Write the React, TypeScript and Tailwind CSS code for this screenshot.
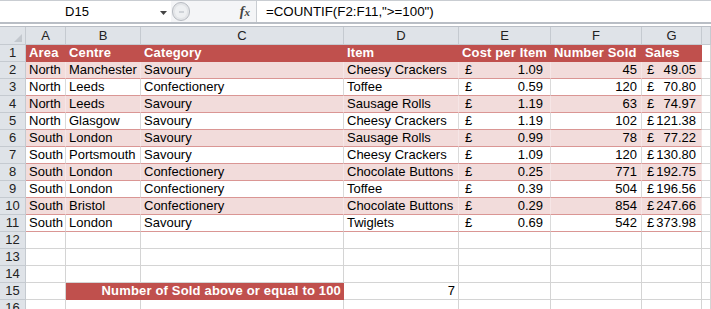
import clsx from 'clsx'

const cn = clsx

type Sale = {
  area: string
  centre: string
  category: string
  item: string
  cost: string
  sold: number
  sales: string
}

const rows: Sale[] = [
  { area: 'North', centre: 'Manchester', category: 'Savoury', item: 'Cheesy Crackers', cost: '1.09', sold: 45, sales: '49.05' },
  { area: 'North', centre: 'Leeds', category: 'Confectionery', item: 'Toffee', cost: '0.59', sold: 120, sales: '70.80' },
  { area: 'North', centre: 'Leeds', category: 'Savoury', item: 'Sausage Rolls', cost: '1.19', sold: 63, sales: '74.97' },
  { area: 'North', centre: 'Glasgow', category: 'Savoury', item: 'Cheesy Crackers', cost: '1.19', sold: 102, sales: '121.38' },
  { area: 'South', centre: 'London', category: 'Savoury', item: 'Sausage Rolls', cost: '0.99', sold: 78, sales: '77.22' },
  { area: 'South', centre: 'Portsmouth', category: 'Savoury', item: 'Cheesy Crackers', cost: '1.09', sold: 120, sales: '130.80' },
  { area: 'South', centre: 'London', category: 'Confectionery', item: 'Chocolate Buttons', cost: '0.25', sold: 771, sales: '192.75' },
  { area: 'South', centre: 'London', category: 'Confectionery', item: 'Toffee', cost: '0.39', sold: 504, sales: '196.56' },
  { area: 'South', centre: 'Bristol', category: 'Confectionery', item: 'Chocolate Buttons', cost: '0.29', sold: 854, sales: '247.66' },
  { area: 'South', centre: 'London', category: 'Savoury', item: 'Twiglets', cost: '0.69', sold: 542, sales: '373.98' },
]

const gridCols = 'grid grid-cols-[26px_40px_75px_203px_115px_92px_91px_60px_1fr]'
const cell = 'h-[17px] border-b border-r px-[3px] flex items-center leading-[16px] whitespace-nowrap overflow-hidden'

function RowNum({ n }: { n: number }) {
  return (
    <div className="flex h-[17px] items-center justify-center border-b border-r border-[#c5cad0] bg-[#dfe3e8] text-[#222]">
      {n}
    </div>
  )
}

function Blank({ className }: { className?: string }) {
  return <div className={cn(cell, 'border-[#d4d4d4]', className)} />
}

export default function App() {
  return (
    <div className="h-[309px] w-[711px] overflow-hidden bg-white text-[13px] text-black [font-family:'Liberation_Sans',Arial,sans-serif]">
      {/* formula bar */}
      <div className="flex h-[24px] border-b-2 border-t border-b-[#b9bec5] border-t-[#c9cdd2]">
        <div className="relative flex w-[171px] items-center">
          <span className="w-[154px] text-center text-[13px]">D15</span>
          <svg className="absolute left-[160px] top-[10px]" width="7" height="4" viewBox="0 0 7 4">
            <path d="M0 0h7L3.5 4z" fill="#444" />
          </svg>
        </div>
        <div className="flex w-[85px] items-center bg-[#f4f5f7]">
          <div className="ml-[1px] flex h-[19px] w-[18px] items-center justify-center rounded-full border border-[#b8bcc2] bg-[#e3e5e8]">
            <div className="flex h-[13px] w-[12px] items-center justify-center rounded-full bg-[#eef0f2]">
              <div className="h-[2px] w-[5px] bg-[#cfd3d8]" />
            </div>
          </div>
          <span className="ml-auto mr-[6px] text-[14px] font-bold italic text-[#444] [font-family:'Liberation_Serif',serif]">
            f<span className="text-[11px]">x</span>
          </span>
        </div>
        <div className="flex flex-1 items-center border-l border-[#c9cdd2] pl-[9px] text-[13.3px]">
          =COUNTIF(F2:F11,"&gt;=100")
        </div>
      </div>
      <div className="h-[3px] border-b border-[#b9bec5] bg-white" />

      {/* column headers */}
      <div className={gridCols}>
        <div className="relative h-[18px] border-b border-r border-[#c5cad0] bg-[#dfe3e8]">
          <svg className="absolute bottom-[2px] right-[3px]" width="8" height="8" viewBox="0 0 8 8">
            <path d="M8 0V8H0z" fill="#c3c8ce" />
          </svg>
        </div>
        {['A', 'B', 'C', 'D', 'E', 'F', 'G', ''].map((c, i) => (
          <div
            key={i}
            className="flex h-[18px] items-center justify-center border-b border-r border-[#c5cad0] bg-[#dfe3e8] text-[#222]"
          >
            {c}
          </div>
        ))}
      </div>

      {/* table header row */}
      <div className={gridCols}>
        <RowNum n={1} />
        {['Area', 'Centre', 'Category', 'Item', 'Cost per Item', 'Number Sold', 'Sales'].map((h) => (
          <div key={h} className={cn(cell, 'border-[#c0504d] bg-[#c0504d] font-bold tracking-[0.15px] text-white')}>
            {h}
          </div>
        ))}
        <Blank />
      </div>

      {rows.map((r, i) => {
        const pink = i % 2 === 0
        const c = cn(cell, 'border-b-[#da9694]', pink ? 'bg-[#f2dcdb] border-r-[#f6e6e6]' : 'bg-white border-r-[#dadada]')
        return (
          <div key={i} className={gridCols}>
            <RowNum n={i + 2} />
            <div className={c}>{r.area}</div>
            <div className={c}>{r.centre}</div>
            <div className={c}>{r.category}</div>
            <div className={c}>{r.item}</div>
            <div className={cn(c, 'justify-between pl-[6px] pr-[7px]')}>
              <span>£</span>
              <span>{r.cost}</span>
            </div>
            <div className={cn(c, 'justify-end pr-[4px]')}>{r.sold}</div>
            <div className={cn(c, 'justify-between border-r-[#da9694] pl-[5px] pr-[5px]')}>
              <span>£</span>
              <span>{r.sales}</span>
            </div>
            <Blank />
          </div>
        )
      })}

      {[12, 13, 14, 15, 16].map((n) => (
        <div key={n} className={gridCols}>
          <RowNum n={n} />
          <Blank />
          {n === 15 ? (
            <>
              <div className={cn(cell, 'col-span-2 justify-end border-[#c0504d] bg-[#c0504d] pr-[2px] font-bold tracking-[0.17px] text-white')}>
                Number of Sold above or equal to 100
              </div>
              <div className={cn(cell, 'justify-end border-[#d4d4d4] pr-[3px]')}>7</div>
            </>
          ) : (
            <>
              <Blank />
              <Blank />
              <Blank />
            </>
          )}
          <Blank />
          <Blank />
          <Blank />
          <Blank />
        </div>
      ))}
    </div>
  )
}
